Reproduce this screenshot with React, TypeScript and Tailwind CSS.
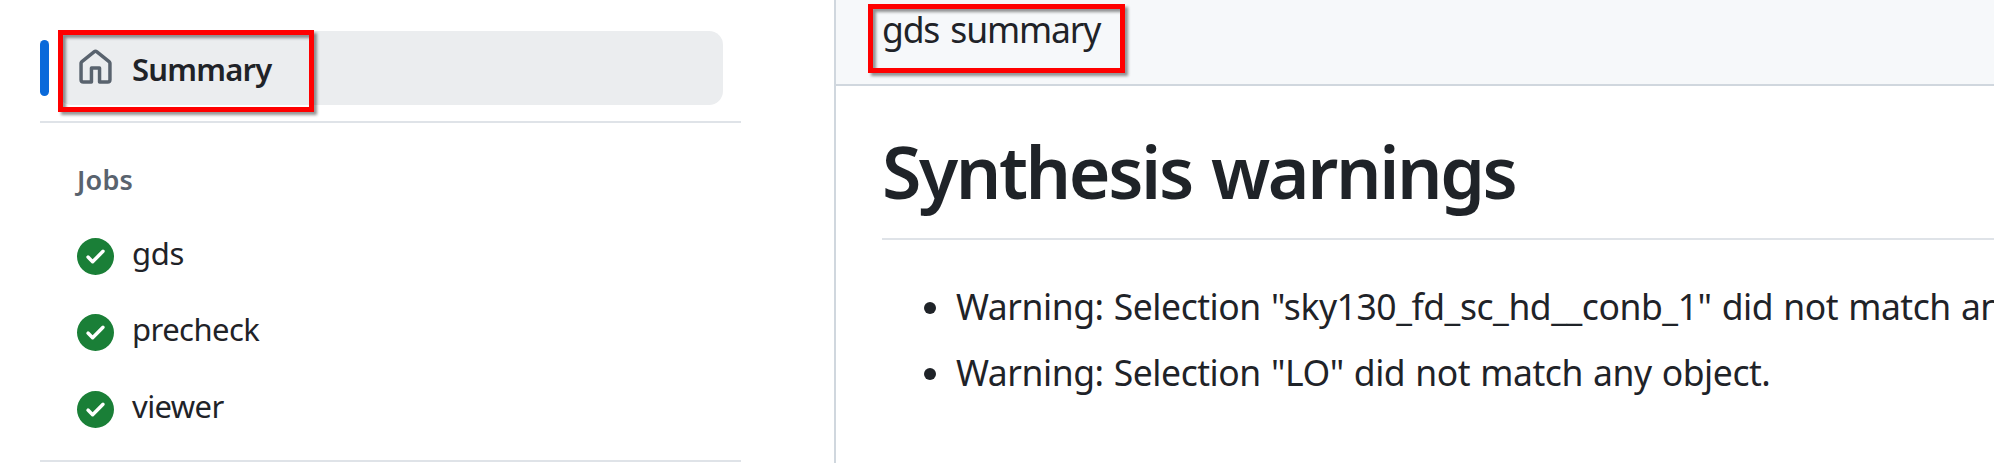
const HOME =
  'M6.906.664a1.749 1.749 0 0 1 2.187 0l5.25 4.2c.415.332.657.835.657 1.367v7.019A1.75 1.75 0 0 1 13.25 15h-3.5a.75.75 0 0 1-.75-.75V9H7v5.25a.75.75 0 0 1-.75.75h-3.5A1.75 1.75 0 0 1 1 13.25V6.23c0-.531.242-1.034.657-1.366l5.25-4.2Zm1.25 1.171a.25.25 0 0 0-.312 0l-5.25 4.2a.25.25 0 0 0-.094.196v7.019c0 .138.112.25.25.25H5.5V8.25a.75.75 0 0 1 .75-.75h3.5a.75.75 0 0 1 .75.75v5.25h2.75a.25.25 0 0 0 .25-.25V6.23a.25.25 0 0 0-.094-.195Z';
const CHECK =
  'M8 16A8 8 0 1 1 8 0a8 8 0 0 1 0 16Zm3.78-9.72a.751.751 0 0 0-.018-1.042.751.751 0 0 0-1.042-.018L6.75 9.19 5.28 7.72a.751.751 0 0 0-1.042.018.751.751 0 0 0-.018 1.042l2 2a.75.75 0 0 0 1.06 0Z';

function Icon({ d, className }: { d: string; className: string }) {
  return (
    <svg viewBox="0 0 16 16" fill="currentColor" className={`size-[37px] shrink-0 ${className}`}>
      <path d={d} />
    </svg>
  );
}

function Highlight({ className }: { className: string }) {
  return (
    <div
      className={`absolute border-[5px] border-[#ff0000] [filter:drop-shadow(3px_3px_1.5px_rgba(0,0,0,0.42))] ${className}`}
    />
  );
}

const jobs = [
  { name: 'gds', spacing: 'tracking-[-0.3px]' },
  { name: 'precheck', spacing: 'tracking-[-0.55px]' },
  { name: 'viewer', spacing: 'tracking-[-0.6px]' },
];

const warnings = [
  'Warning: Selection "sky130_fd_sc_hd__conb_1" did not match any object.',
  'Warning: Selection "LO" did not match any object.',
];

export default function App() {
  return (
    <div className="flex h-[463px] w-[1994px] overflow-hidden bg-white font-['Noto_Sans','Open_Sans',sans-serif] whitespace-nowrap text-[#1f2328]">
      <aside className="w-[834px] shrink-0 pt-[31px] pl-10">
        <div className="flex w-[701px] items-center">
          <span className="h-14 w-[9px] rounded-full bg-[#0969da]" />
          <div className="relative ml-[9px] flex h-[74px] w-[665px] items-center rounded-[14px] bg-[#ebedef] pl-[19px]">
            <Icon d={HOME} className="mb-px text-[#59636e]" />
            <span className="mt-0.5 ml-[18px] text-[31px] leading-[48px] font-semibold tracking-[-0.8px]">
              Summary
            </span>
            <Highlight className="-top-px left-0 h-[82px] w-64" />
          </div>
        </div>
        <hr className="mt-4 w-[701px] border-t-2 border-[#dfe3e8]" />
        <h3 className="mt-9 ml-[37px] text-[27px] leading-[41px] font-semibold tracking-[0.2px] text-[#59636e]">
          Jobs
        </h3>
        <ul className="mt-[18px] ml-[37px]">
          {jobs.map((job) => (
            <li key={job.name} className="flex h-[76.5px] items-center">
              <Icon d={CHECK} className="text-[#1a7f37]" />
              <span className={`mb-[7px] ml-[18px] text-[31px] leading-[48px] ${job.spacing}`}>{job.name}</span>
            </li>
          ))}
        </ul>
        <hr className="mt-[12.5px] w-[701px] border-t-2 border-[#dfe3e8]" />
      </aside>
      <main className="min-w-0 flex-1 border-l-2 border-[#d0d7de]">
        <header className="relative h-[86px] border-b-2 border-[#d0d7de] bg-[#f6f8fa] pl-[46px]">
          <p className="text-[35.5px] leading-[59px] tracking-[-1.15px] [word-spacing:3px]">gds summary</p>
          <Highlight className="top-1 left-8 h-[69px] w-[257px]" />
        </header>
        <article className="pt-[38px] pl-[46px]">
          <h1 className="h-[116px] border-b-2 border-[#dfe3e8] text-[71.5px] leading-[96px] font-semibold tracking-[-2.4px] [word-spacing:3px]">
            Synthesis warnings
          </h1>
          <ul className="mt-[33px]">
            {warnings.map((text) => (
              <li key={text} className="flex h-[66px] items-center">
                <span className="mt-1 ml-[42px] size-3 shrink-0 rounded-full bg-[#1f2328]" />
                <span className="ml-5 text-[35.5px] leading-[56px] tracking-[-0.45px] [word-spacing:1.3px]">{text}</span>
              </li>
            ))}
          </ul>
        </article>
      </main>
    </div>
  );
}
